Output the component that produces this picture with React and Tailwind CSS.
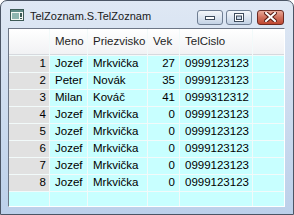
import React from 'react';

const rows = [
  { id: 1, meno: 'Jozef', priezvisko: 'Mrkvička', vek: 27, tel: '0999123123' },
  { id: 2, meno: 'Peter', priezvisko: 'Novák', vek: 35, tel: '0999123123' },
  { id: 3, meno: 'Milan', priezvisko: 'Kováč', vek: 41, tel: '0999312312' },
  { id: 4, meno: 'Jozef', priezvisko: 'Mrkvička', vek: 0, tel: '0999123123' },
  { id: 5, meno: 'Jozef', priezvisko: 'Mrkvička', vek: 0, tel: '0999123123' },
  { id: 6, meno: 'Jozef', priezvisko: 'Mrkvička', vek: 0, tel: '0999123123' },
  { id: 7, meno: 'Jozef', priezvisko: 'Mrkvička', vek: 0, tel: '0999123123' },
  { id: 8, meno: 'Jozef', priezvisko: 'Mrkvička', vek: 0, tel: '0999123123' },
];

const headers = ['', 'Meno', 'Priezvisko', 'Vek', 'TelCislo', ''];

function AppIcon() {
  return (
    <svg width="14" height="12" viewBox="0 0 14 12">
      <rect x="0.5" y="0.5" width="13" height="11" fill="#f4f7f4" stroke="#3c5a56" />
      <rect x="1" y="1" width="12" height="2" fill="#5e8a86" />
      <rect x="2" y="4" width="7" height="6" fill="#8fb5b0" />
      <rect x="10" y="4" width="2" height="4" fill="#3c5a56" />
      <rect x="10" y="9" width="2" height="1" fill="#3c5a56" />
    </svg>
  );
}

function CaptionButton({ kind }) {
  const close = kind === 'close';
  return (
    <div
      className={
        close
          ? 'w-[27px] h-[15px] rounded-[3px] border border-[#6b2a22] bg-gradient-to-b from-[#e9a897] via-[#d0705c] to-[#c0472f] flex items-center justify-center'
          : 'w-[26px] h-[15px] rounded-[3px] border border-[#6f7e93] bg-gradient-to-b from-[#f3f6fa] via-[#dce5f0] to-[#c3d2e5] flex items-center justify-center'
      }
    >
      {kind === 'min' && (
        <svg width="10" height="6" viewBox="0 0 10 6">
          <rect x="0.5" y="2.5" width="9" height="3" fill="#fff" stroke="#3d4b5c" />
        </svg>
      )}
      {kind === 'max' && (
        <svg width="10" height="9" viewBox="0 0 10 9">
          <rect x="0.5" y="0.5" width="9" height="8" fill="#fff" stroke="#3d4b5c" />
          <rect x="2.5" y="3" width="5" height="3.5" fill="#c9d6e6" stroke="#3d4b5c" />
        </svg>
      )}
      {close && (
        <svg width="13" height="10" viewBox="0 0 13 10">
          <path d="M2 1 L11 9 M11 1 L2 9" stroke="#5a1d14" strokeWidth="4" strokeLinecap="square" />
          <path d="M2 1 L11 9 M11 1 L2 9" stroke="#ffffff" strokeWidth="2" strokeLinecap="square" />
        </svg>
      )}
    </div>
  );
}

export default function App() {
  return (
    <div
      className="w-[294px] h-[215px] rounded-t-[7px] border border-[#4b5565] bg-gradient-to-b from-[#dfe8f4] to-[#bcd0ea] flex flex-col"
      style={{ fontFamily: '"Liberation Sans", Arial, sans-serif' }}
    >
      {/* title bar */}
      <div className="h-[27px] flex items-center pl-[9px] pr-[9px]">
        <AppIcon />
        <span className="ml-[6px] text-[11px] text-[#1a1a1a] mt-[4px]">TelZoznam.S.TelZoznam</span>
        <div className="ml-auto flex items-center mt-[5px]">
          <CaptionButton kind="min" />
          <div className="ml-[3px]">
            <CaptionButton kind="max" />
          </div>
          <div className="ml-[5px]">
            <CaptionButton kind="close" />
          </div>
        </div>
      </div>

      {/* client area */}
      <div className="ml-[7px] mr-[8px] mb-[7px] flex-1 border-t border-l border-[#6d7686] border-b border-r border-b-white border-r-white flex">
        <div className="flex-1 grid grid-cols-[40px_37px_59px_31px_72px_1fr] grid-rows-[26px_repeat(8,16px)_1fr] gap-px bg-[#f2fafa] text-[11.5px] text-black">
          {headers.map((h, i) => (
            <div
              key={'h' + i}
              className="bg-gradient-to-b from-white to-[#f1f2f4] border-b border-[#d6d9de] flex items-center pl-[5px] text-[#1e1e1e]"
            >
              {h}
            </div>
          ))}
          {rows.map((r) => (
            <React.Fragment key={r.id}>
              <div className="bg-[#e1e1e1] flex items-center justify-end pr-[3px]">{r.id}</div>
              <div className="bg-[#c8ffff] flex items-center pl-[5px]">{r.meno}</div>
              <div className="bg-[#c8ffff] flex items-center pl-[5px]">{r.priezvisko}</div>
              <div className="bg-[#c8ffff] flex items-center justify-end pr-[4px]">{r.vek}</div>
              <div className="bg-[#c8ffff] flex items-center pl-[5px]">{r.tel}</div>
              <div className="bg-[#c8ffff]" />
            </React.Fragment>
          ))}
          <div className="bg-[#c8ffff]" />
          <div className="bg-[#c8ffff]" />
          <div className="bg-[#c8ffff]" />
          <div className="bg-[#c8ffff]" />
          <div className="bg-[#c8ffff]" />
          <div className="bg-[#c8ffff]" />
        </div>
      </div>
    </div>
  );
}
